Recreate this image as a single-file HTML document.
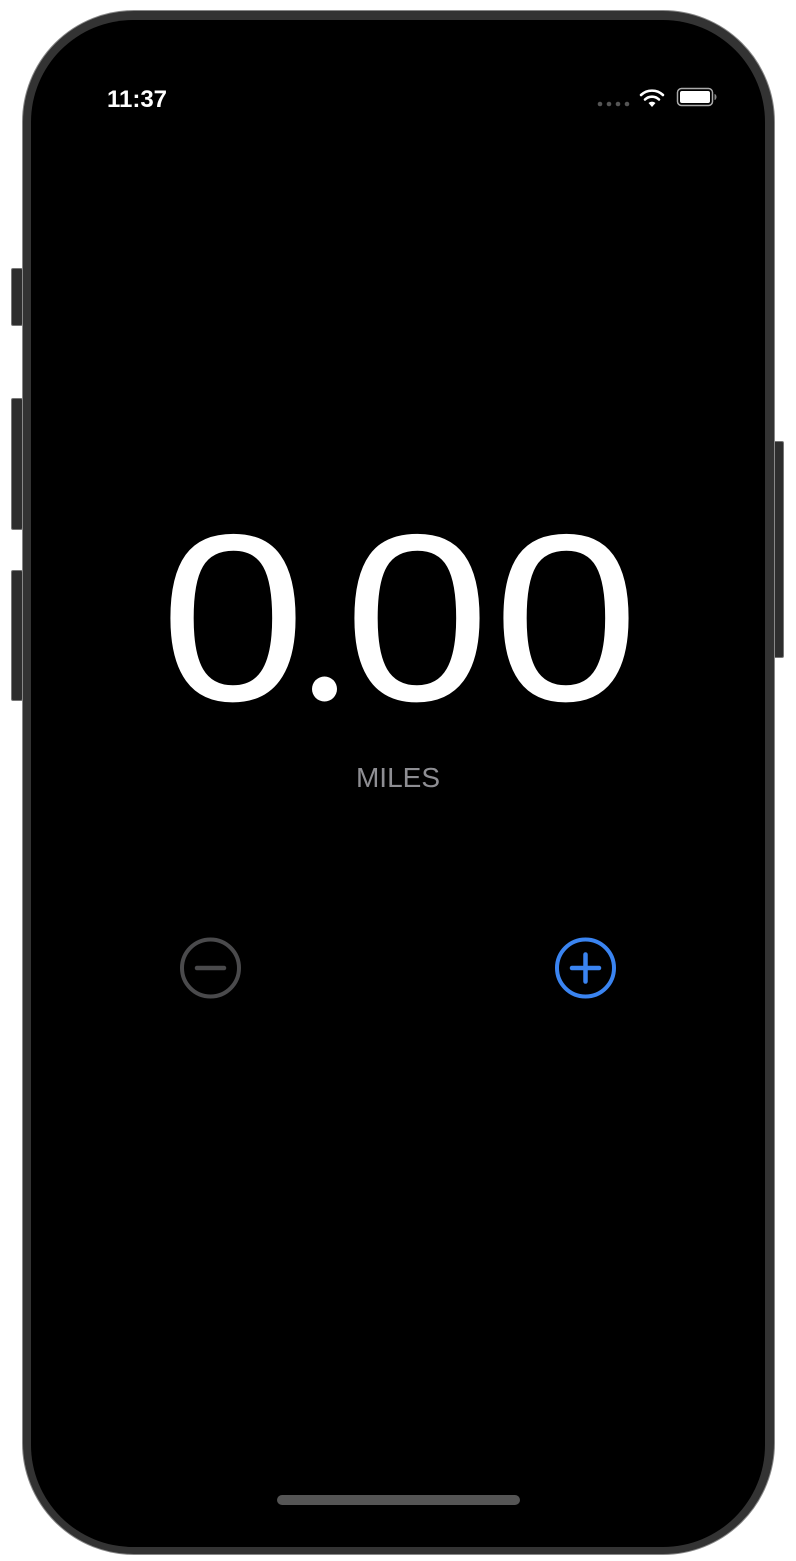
<!DOCTYPE html>
<html><head><style>
html,body{margin:0;padding:0;background:#fff;width:796px;height:1561px;overflow:hidden;position:relative;font-family:"Liberation Sans",sans-serif}
.btn{position:absolute;background:#2e2e2e;border:1px solid #777;box-sizing:border-box;border-radius:2px}
.frame{position:absolute;left:22px;top:10px;width:753px;height:1545px;border-radius:112px;background:#333;border:1px solid #888;box-sizing:border-box}
.screen{position:absolute;left:31px;top:20px;width:734px;height:1527px;border-radius:102px;background:#000;overflow:hidden}
</style></head><body>
<div class="btn" style="left:11px;top:268px;width:12px;height:58px"></div>
<div class="btn" style="left:11px;top:398px;width:12px;height:132px"></div>
<div class="btn" style="left:11px;top:570px;width:12px;height:131px"></div>
<div class="btn" style="left:773px;top:441px;width:11px;height:217px"></div>
<div class="frame"></div>
<div class="screen"></div>
<svg width="796" height="1561" style="position:absolute;left:0;top:0">
<text x="137" y="107" fill="#fff" font-size="24" font-weight="bold" text-anchor="middle" font-family="Liberation Sans">11:37</text>
<g fill="#555"><circle cx="600" cy="104" r="2.3"/><circle cx="609" cy="104" r="2.3"/><circle cx="618" cy="104" r="2.3"/><circle cx="627" cy="104" r="2.3"/></g>
<g fill="none" stroke="#fff" stroke-width="2.6" stroke-linecap="round">
<path d="M641 95 A16 16 0 0 1 663 95"/><path d="M645 99.5 A10 10 0 0 1 659 99.5"/></g>
<path d="M648.5 103 L652 107 L655.5 103 A5 5 0 0 0 648.5 103Z" fill="#fff"/>
<rect x="677.5" y="88.5" width="35" height="17" rx="4" fill="none" stroke="#aaa" stroke-width="1.5"/>
<rect x="680" y="91" width="30" height="12" rx="2" fill="#fff"/>
<path d="M714.5 94 v6 a2 3 0 0 0 0 -6z" fill="#888"/>
<g fill="#fff" font-size="238" font-family="Liberation Sans" text-anchor="middle">
<text x="233" y="700" transform="translate(233 0) scale(1.1 1) translate(-233 0)">0</text>
<text x="417" y="700" transform="translate(417 0) scale(1.1 1) translate(-417 0)">0</text>
<text x="566" y="700" transform="translate(566 0) scale(1.1 1) translate(-566 0)">0</text>
</g>
<circle cx="324.5" cy="689" r="12.5" fill="#fff"/>
<text x="398" y="787" fill="#8e8e93" font-size="28" text-anchor="middle" font-family="Liberation Sans">MILES</text>
<circle cx="210.5" cy="968" r="28.5" fill="none" stroke="#4a4a4c" stroke-width="4"/>
<line x1="197" y1="968" x2="224" y2="968" stroke="#4a4a4c" stroke-width="4.5" stroke-linecap="round"/>
<circle cx="585.5" cy="968" r="28.5" fill="none" stroke="#3a84f1" stroke-width="4"/>
<line x1="572" y1="968" x2="599" y2="968" stroke="#3a84f1" stroke-width="4.5" stroke-linecap="round"/>
<line x1="585.5" y1="954.5" x2="585.5" y2="981.5" stroke="#3a84f1" stroke-width="4.5" stroke-linecap="round"/>
<rect x="277" y="1495" width="243" height="10" rx="5" fill="#555"/>
</svg>
</body></html>
